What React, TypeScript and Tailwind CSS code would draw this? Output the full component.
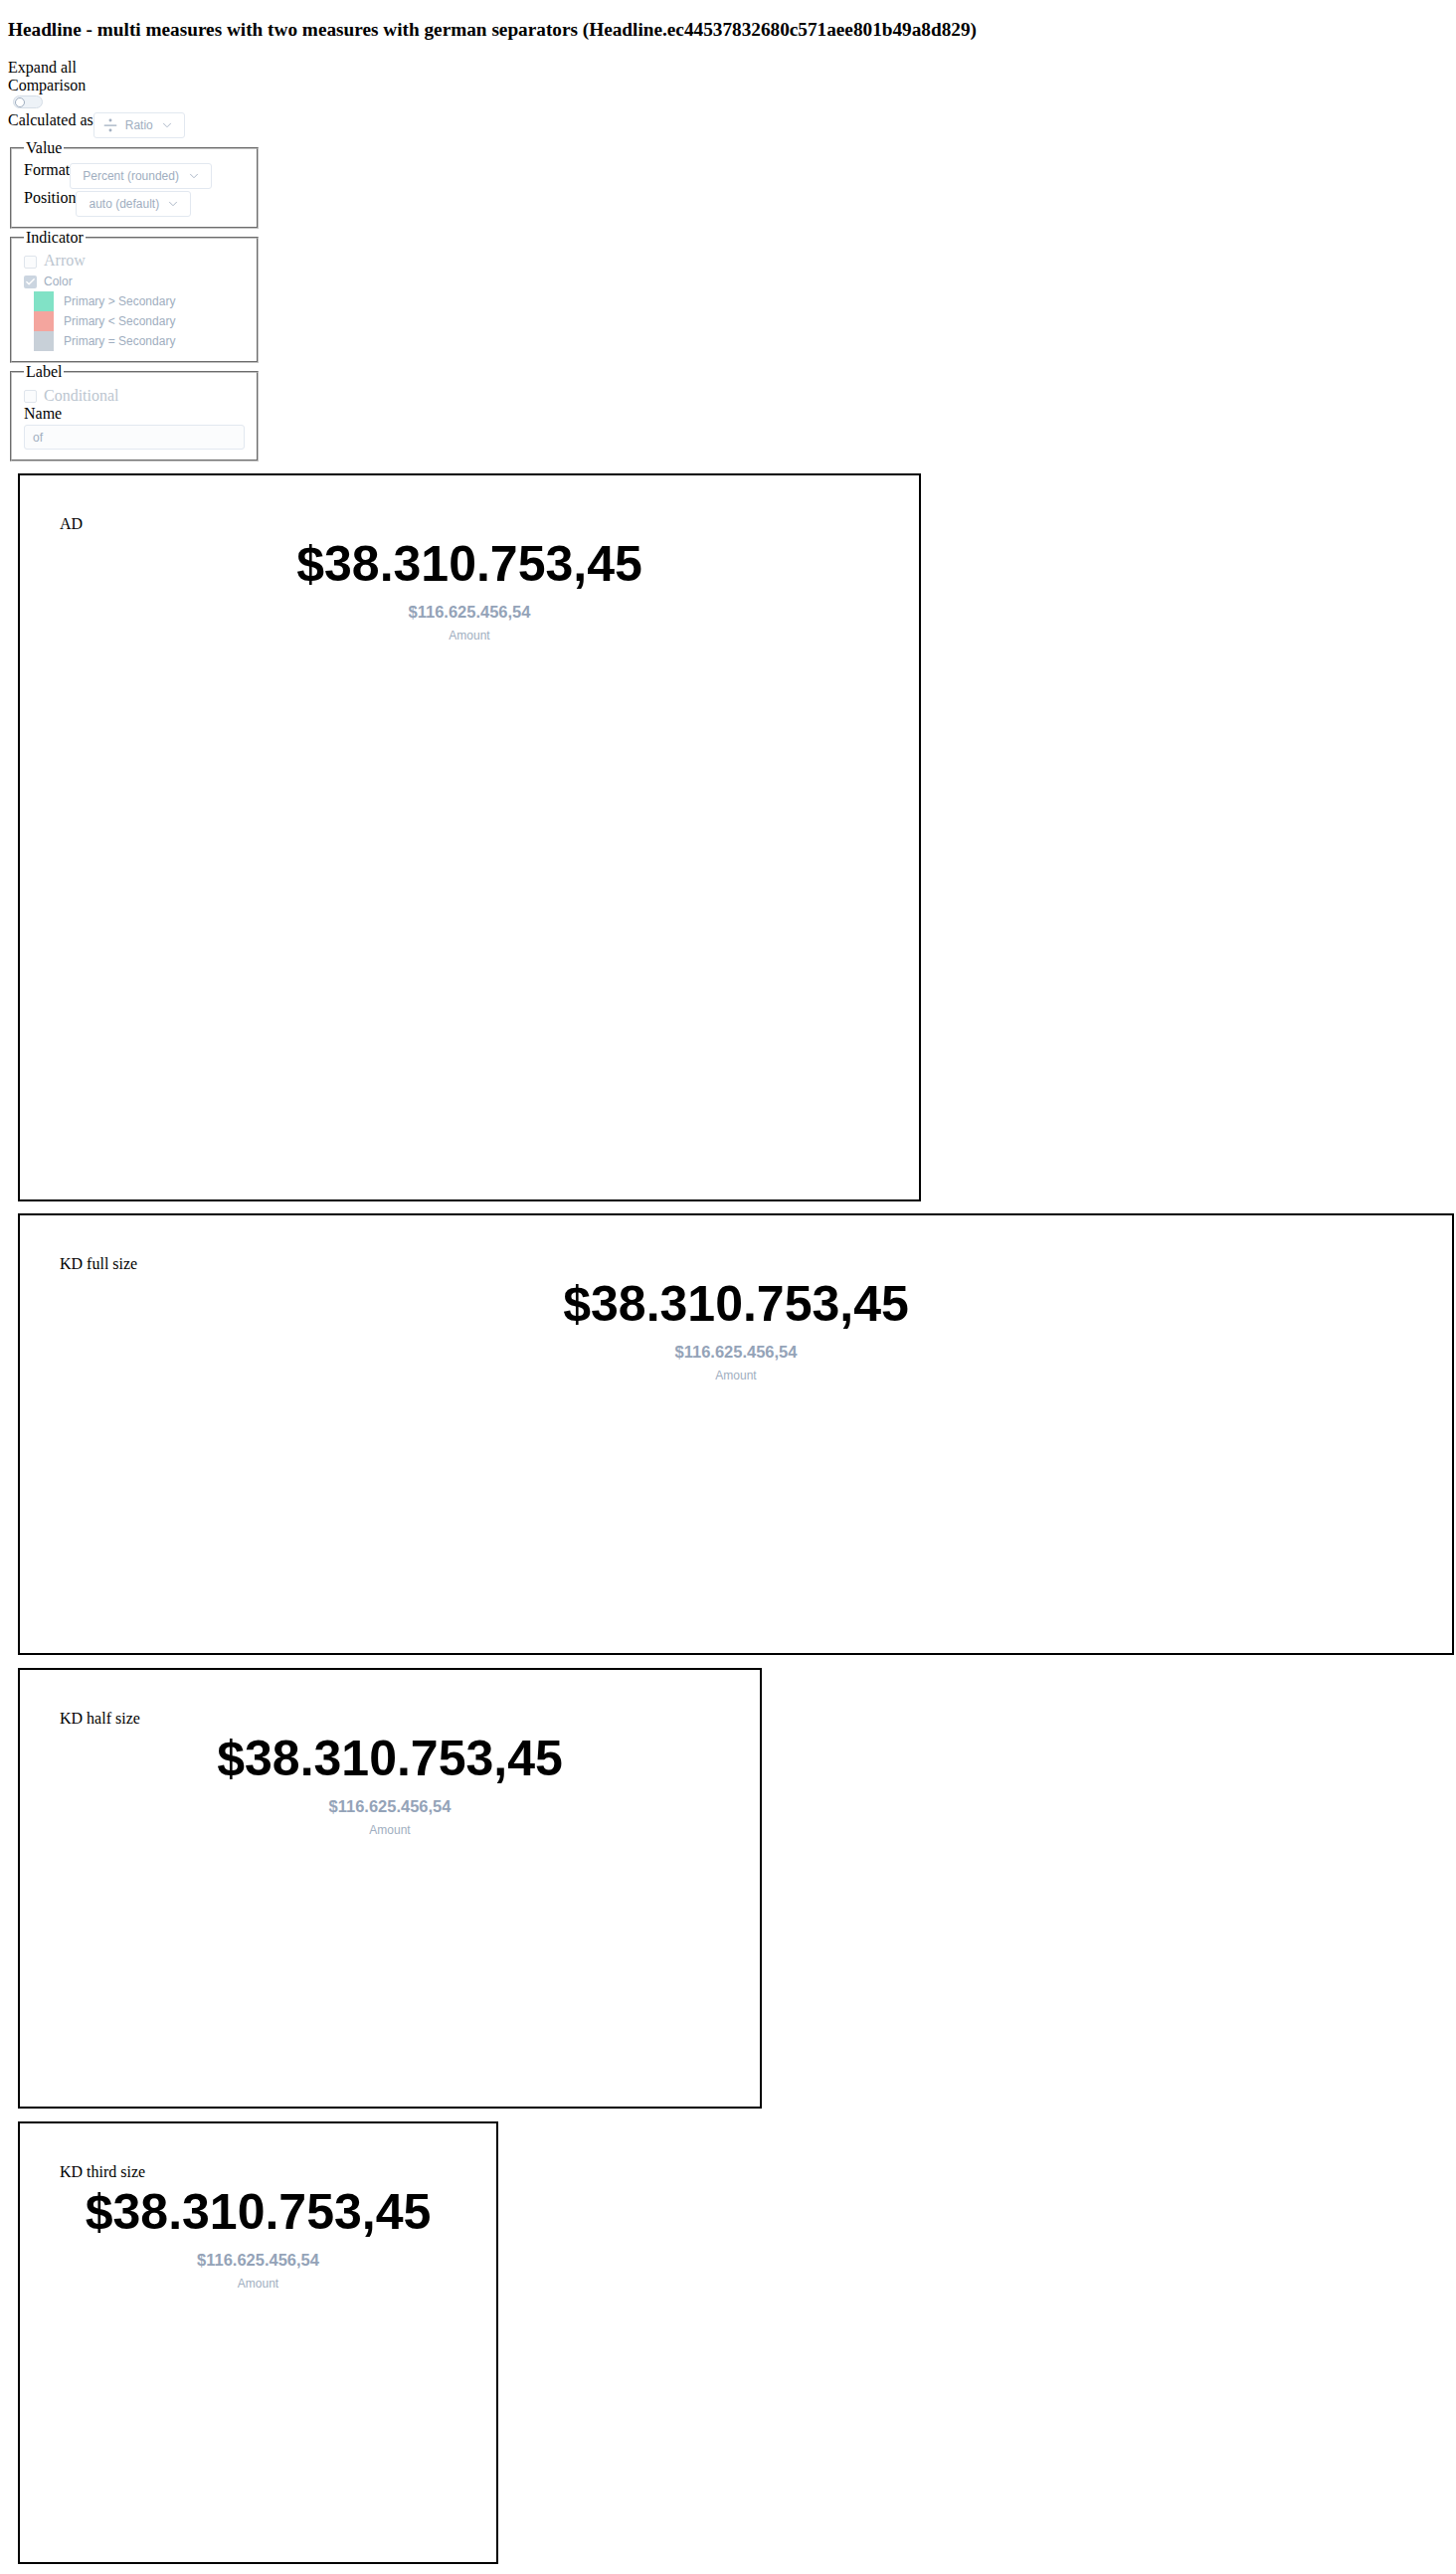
import React from 'react';
import { Check, ChevronDown, Divide } from 'lucide-react';

const sans = "font-['Liberation_Sans',Arial,sans-serif]";

const Select: React.FC<{ w: string; icon?: boolean; children: React.ReactNode }> = ({ w, icon, children }) => (
  <div className={`flex h-[26px] shrink-0 items-center justify-between rounded-[3px] border border-[#e2e8f0] bg-white ${icon ? 'pl-[6px]' : 'pl-3'} pr-[10px] ${sans} text-[12px] text-[#a0aec0] ${w}`}>
    <span className="flex items-center gap-[5px]">
      {icon && <Divide size={20} strokeWidth={1.5} className="text-[#a0aec0]" />}
      <span>{children}</span>
    </span>
    <ChevronDown size={14} strokeWidth={1.5} />
  </div>
);

const Box: React.FC<{ checked?: boolean }> = ({ checked }) =>
  checked ? (
    <span className="flex h-[13px] w-[13px] shrink-0 items-center justify-center rounded-[2px] bg-[#cbd5e0] text-white">
      <Check size={11} strokeWidth={3} />
    </span>
  ) : (
    <span className="block h-[13px] w-[13px] shrink-0 rounded-[2px] border border-[#dfe5ec] bg-[#fbfcfd]" />
  );

const Fieldset: React.FC<{ legend: string; children: React.ReactNode }> = ({ legend, children }) => (
  <fieldset className="mx-[2px] w-[250px] border-2 border-[#c0c0c0] px-3 pb-[10px] pt-[5.6px] [border-style:groove]">
    <legend className="px-[2px]">{legend}</legend>
    {children}
  </fieldset>
);

const swatches = [
  { c: 'bg-[#81e2c6]', t: 'Primary > Secondary' },
  { c: 'bg-[#f4a59e]', t: 'Primary < Secondary' },
  { c: 'bg-[#c8d0d8]', t: 'Primary = Secondary' },
];

const Card: React.FC<{ label: string; size: string }> = ({ label, size }) => (
  <div className={`ml-[10px] border-2 border-black p-10 ${size}`}>
    <div>{label}</div>
    <div className={`flex flex-col items-center ${sans}`}>
      <div className="mt-[1.5px] text-[50px] font-bold">$38.310.753,45</div>
      <div className="mt-[10px] text-[16.5px] font-bold text-[#94a3b8]">$116.625.456,54</div>
      <div className="mt-[7px] text-[12px] text-[#a0aec0]">Amount</div>
    </div>
  </div>
);

export default function App() {
  return (
    <div className="min-h-screen bg-white px-2 font-['Liberation_Serif','Times_New_Roman',serif] text-[16px] leading-[normal] text-black">
      <h3 className="mb-[18px] mt-[19px] text-[19.25px] font-bold">
        Headline - multi measures with two measures with german separators (Headline.ec44537832680c571aee801b49a8d829)
      </h3>
      <div>Expand all</div>
      <div>Comparison</div>
      <div className="h-[18px] pl-[5px] pt-[1px]">
        <div className="flex h-[13px] w-[30px] items-center rounded-full border border-[#d5dde6] bg-[#edf2f7] px-[1px]">
          <span className="h-[10px] w-[10px] rounded-full border border-[#a0aec0] bg-white" />
        </div>
      </div>
      <div className="mb-[1px] flex items-start">
        <span className="-mt-[1px]">Calculated as</span>
        <Select w="w-[92px]" icon>Ratio</Select>
      </div>

      <Fieldset legend="Value">
        <div className="flex items-start">
          <span className="-mt-[2px]">Format</span>
          <Select w="w-[143px]">Percent (rounded)</Select>
        </div>
        <div className="mt-[2px] flex items-start">
          <span className="-mt-[2px]">Position</span>
          <Select w="w-[116px]">auto (default)</Select>
        </div>
      </Fieldset>

      <Fieldset legend="Indicator">
        <div className="flex h-[18.4px] items-center gap-[7px] text-[#bcc6d0]">
          <span className="mt-[2px]"><Box /></span>
          <span>Arrow</span>
        </div>
        <div className={`flex h-[21.6px] items-center gap-[7px] pt-[2px] ${sans} text-[12px] text-[#a0aec0]`}>
          <Box checked />
          <span>Color</span>
        </div>
        {swatches.map((s) => (
          <div key={s.t} className={`flex h-[20px] items-center pl-[10px] ${sans} text-[12px] text-[#a0aec0]`}>
            <span className={`h-[20px] w-[20px] ${s.c}`} />
            <span className="ml-[10px]">{s.t}</span>
          </div>
        ))}
      </Fieldset>

      <Fieldset legend="Label">
        <div className="flex h-[18.4px] items-center gap-[7px] pt-[1px] text-[#bcc6d0]">
          <Box />
          <span>Conditional</span>
        </div>
        <div>Name</div>
        <input
          readOnly
          value="of"
          className={`mt-[2px] block h-[25px] w-full rounded-[3px] border border-[#e2e8f0] bg-[#fbfcfd] px-2 ${sans} text-[12px] text-[#a0aec0] outline-none`}
        />
      </Fieldset>

      <div className="mt-[12px]">
        <Card label="AD" size="h-[732px] w-[908px]" />
      </div>
      <div className="mt-[12px]">
        <Card label="KD full size" size="h-[444px] w-[1444px]" />
      </div>
      <div className="mt-[13px]">
        <Card label="KD half size" size="h-[443px] w-[748px]" />
      </div>
      <div className="mt-[13px]">
        <Card label="KD third size" size="h-[445px] w-[483px]" />
      </div>
    </div>
  );
}
